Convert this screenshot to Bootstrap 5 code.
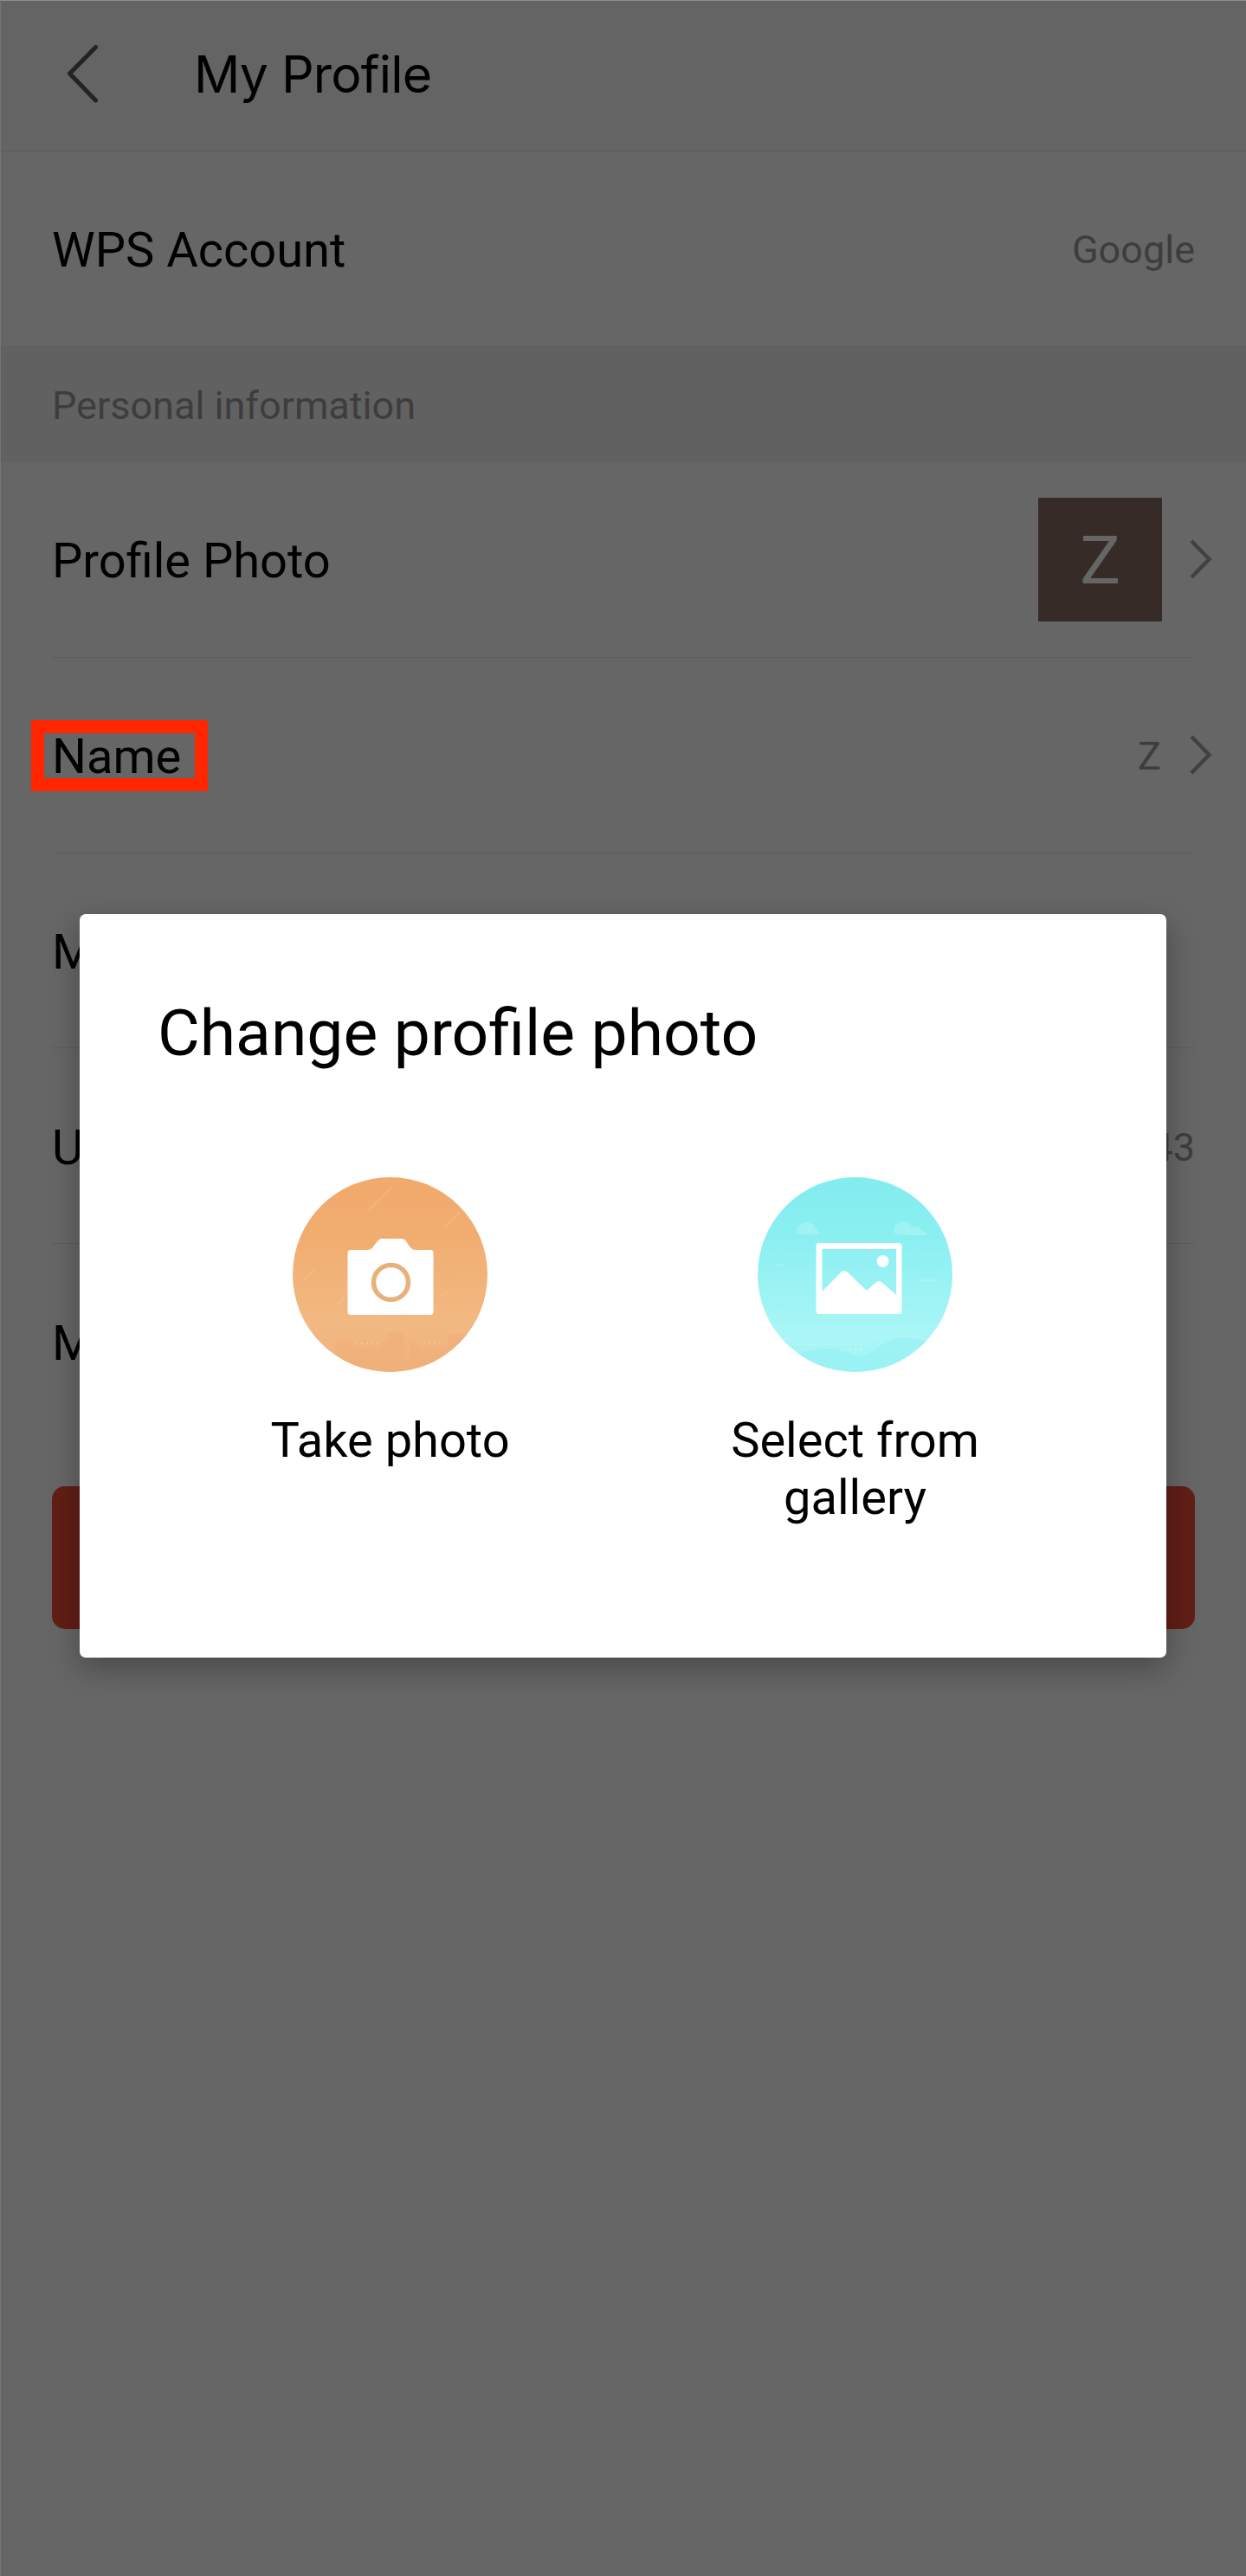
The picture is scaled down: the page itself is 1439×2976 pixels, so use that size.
<!DOCTYPE html>
<html lang="en">
<head>
<meta charset="utf-8">
<meta name="viewport" content="width=device-width, initial-scale=1">
<title>My Profile</title>
<link href="https://cdn.jsdelivr.net/npm/bootstrap@5.3.0/dist/css/bootstrap.min.css" rel="stylesheet">
<style>
  body { background: #666; font-family: Roboto, "Liberation Sans", sans-serif; font-size: 56px; line-height: 66px; color: #000; }
  .screen { height: 2976px; border-top: 1px solid #8e8e8e; border-left: 1px solid #757575; }
  .top-bar { height: 174px; background: #646464; border-bottom: 1px solid #5c5c5c; padding: 0 0 4px 76px; }
  .top-bar h1 { font: 400 59px/80px Inter, sans-serif; margin: 0 0 0 107px; letter-spacing: -.8px; }
  .setting { margin: 0 59px; height: 225.8px; border-bottom: 1px solid #5d5d5d; }
  .setting > span, .group-label > span { padding-top: 4px; }
  .setting.plain { border-bottom-color: transparent; }
  .setting.account { height: 224px; border: 0; }
  .hint { font-size: 45px; line-height: 54px; color: #3d3d3d; }
  .group-label { height: 135px; padding: 0 59px; background: #616161; }
  .with-arrow { margin-right: -20px; }
  .avatar { width: 143px; height: 143px; background: #372b28; color: #666; font-size: 78px; padding-top: 3px; margin-right: 32px; }
  .value { margin-right: 33px; padding-top: 4px; }
  .callout-box { left: -24px; top: -5px; width: 204px; height: 82px; border: 15px solid #ff2600; }
  .logout { display: block; margin: 54px 59px 0; height: 165px; border-radius: 15px; background: #611e16; }
  .photo-dialog { left: 92px; top: 1056px; width: 1255px; height: 859px; border-radius: 7px; box-shadow: 0 12px 36px rgba(0,0,0,.3); padding: 92px 91px 0 90px; }
  .photo-dialog h2 { font-size: 75px; line-height: 90px; font-weight: 400; margin: 0 0 122px; }
  .choice { width: 537px; }
  .choice svg { margin-bottom: 46px; }
  .choice span { width: 330px; }
</style>
</head>
<body>
<main class="screen position-relative overflow-hidden">
  <header class="top-bar d-flex align-items-center">
    <svg width="40" height="70" viewBox="0 0 40 70" fill="none" stroke="#232323" stroke-width="5" stroke-linecap="round" stroke-linejoin="round"><path d="M33.500 3.500 3.500 34 33.500 65"/></svg>
    <h1>My Profile</h1>
  </header>
  <section class="setting account d-flex justify-content-between align-items-center">
    <span>WPS Account</span><span class="hint">Google</span>
  </section>
  <div class="group-label hint d-flex align-items-center"><span>Personal information</span></div>
  <section>
    <div class="setting d-flex justify-content-between align-items-center">
      <span>Profile Photo</span>
      <div class="with-arrow d-flex align-items-center">
        <div class="avatar d-flex align-items-center justify-content-center">Z</div>
        <svg width="26" height="46" viewBox="0 0 26 46" fill="none" stroke="#414141" stroke-width="4.500"><path d="M2 2 22.500 23 2 44"/></svg>
      </div>
    </div>
    <div class="setting d-flex justify-content-between align-items-center">
      <span class="position-relative">Name<i class="callout-box position-absolute"></i></span>
      <div class="with-arrow d-flex align-items-center">
        <span class="hint value">Z</span>
        <svg width="26" height="46" viewBox="0 0 26 46" fill="none" stroke="#414141" stroke-width="4.500"><path d="M2 2 22.500 23 2 44"/></svg>
      </div>
    </div>
    <div class="setting d-flex align-items-center"><span>M</span></div>
    <div class="setting d-flex justify-content-between align-items-center"><span>U</span><span class="hint">43</span></div>
    <div class="setting plain d-flex align-items-center"><span>M</span></div>
  </section>
  <div class="logout"></div>
</main>

<div class="photo-dialog position-absolute bg-white" role="dialog" aria-label="Change profile photo">
  <h2>Change profile photo</h2>
  <div class="d-flex">
    <div class="choice d-flex flex-column align-items-center text-center">
      <svg width="225" height="225" viewBox="0 0 225 225">
        <defs>
          <linearGradient id="warm" x2="0" y2="1"><stop offset="0" stop-color="#f2a96c"/><stop offset=".3" stop-color="#f1ad70"/><stop offset=".75" stop-color="#f2b982"/><stop offset="1" stop-color="#f0b17b"/></linearGradient>
          <clipPath id="disc"><circle cx="112.500" cy="112.500" r="112.500"/></clipPath>
        </defs>
        <g clip-path="url(#disc)">
          <path fill="url(#warm)" d="M0 0h225v225H0z"/>
          <path d="M88 38 115 11M175 58 193 40M12 119 27 106M51 148 60 138M171 138 180 131" stroke="#f8c898" stroke-width="1.500" opacity=".5"/>
          <path d="M50 225V190h19v8h35v-9h4v-9h20v31h8v-21l15 8h29v-17h45v44z" fill="#efad76" opacity=".5"/>
          <path d="M73 192h28M151 191h22" stroke="#f9d5a6" stroke-width="1.500" stroke-dasharray="2 4" opacity=".7"/>
        </g>
        <path fill="#fff" d="M67 84h18c5 0 7-2 9-5l3-4q3-4 6-4h22q4 0 6 3l4 6q3 4 7 4h17q3.500 0 3.500 3.500v68q0 3.500-3.500 3.500H67q-3.500 0-3.500-3.500v-68Q63.500 84 67 84z"/>
        <circle cx="113.500" cy="121.500" r="20" fill="#fff" stroke="#eab07b" stroke-width="5.500"/>
      </svg>
      <span>Take photo</span>
    </div>
    <div class="choice d-flex flex-column align-items-center text-center">
      <svg width="225" height="225" viewBox="0 0 225 225">
        <defs><linearGradient id="cool" x2="0" y2="1"><stop offset="0" stop-color="#83ecef"/><stop offset=".3" stop-color="#8aeff1"/><stop offset=".82" stop-color="#abf6f7"/><stop offset="1" stop-color="#a0f5f6"/></linearGradient></defs>
        <g clip-path="url(#disc)">
          <path fill="url(#cool)" d="M0 0h225v225H0z"/>
          <path d="M45 63q0-7 5-8 5-6 10-2 5 1 6 5 5 2 5 8-14 1-26-1zM158 62q-1-8 5-9 5-4 10 0 4 1 5 4 9-1 11 4 5 2 6 6-24 1-37-2z" fill="#a5f3f3" opacity=".85"/>
          <path d="M20 102h9M186 119h20" stroke="#b3f7f6" stroke-width="2" opacity=".5"/>
          <path d="M40 207q38-18 75 0 17-2 29-14 20-12 42-5l39 3v34H30z" fill="#92f0f1" opacity=".5"/>
          <path d="M40 193h90M106 199h14" stroke="#d0fafa" stroke-width="2" stroke-dasharray="2 4" opacity=".6"/>
        </g>
        <path fill="#fff" fill-rule="evenodd" d="M71 76h92q3.500 0 3.500 3.500v75q0 3.500-3.500 3.500H71q-3.500 0-3.500-3.500v-75Q67.500 76 71 76zM74.500 83v49L96 110q4-4 8 0l22 21 10-9q4-4 8 0l16 14V83z"/>
        <circle cx="144.500" cy="97" r="7" fill="#fff"/>
      </svg>
      <span>Select from gallery</span>
    </div>
  </div>
</div>
<script src="https://cdn.jsdelivr.net/npm/bootstrap@5.3.0/dist/js/bootstrap.bundle.min.js"></script>
</body>
</html>
